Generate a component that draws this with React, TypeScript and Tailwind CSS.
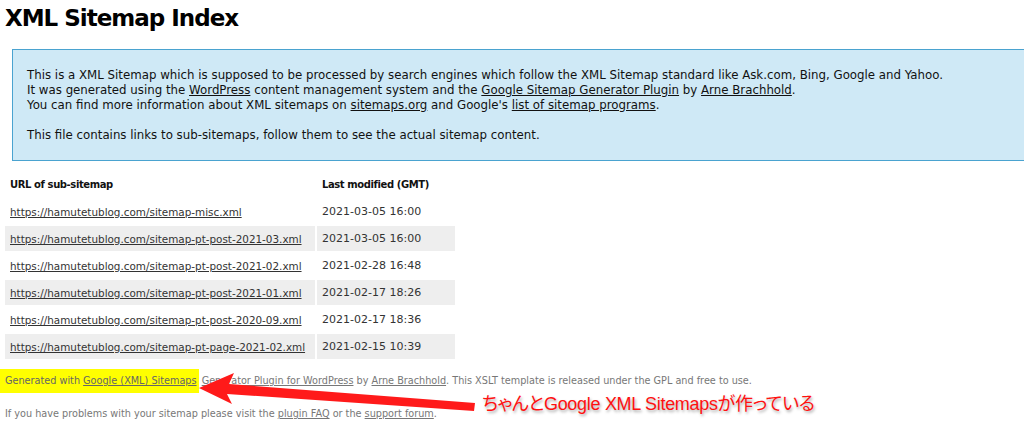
import React from "react";

const rows = [
  ["https://hamutetublog.com/sitemap-misc.xml", "2021-03-05 16:00"],
  ["https://hamutetublog.com/sitemap-pt-post-2021-03.xml", "2021-03-05 16:00"],
  ["https://hamutetublog.com/sitemap-pt-post-2021-02.xml", "2021-02-28 16:48"],
  ["https://hamutetublog.com/sitemap-pt-post-2021-01.xml", "2021-02-17 18:26"],
  ["https://hamutetublog.com/sitemap-pt-post-2020-09.xml", "2021-02-17 18:36"],
  ["https://hamutetublog.com/sitemap-pt-page-2021-02.xml", "2021-02-15 10:39"],
];

export default function App() {
  return (
    <div className="relative w-[1024px] h-[437px] overflow-hidden bg-white text-[#222] font-['DejaVu_Sans',sans-serif]">
      <h1 className="pl-[5px] pt-[3px] text-[23px] leading-[30px] font-bold tracking-[-1px] text-black">
        XML Sitemap Index
      </h1>
      <div className="ml-[12px] mt-[16px] w-[1100px] border border-[#4aa3d0] bg-[#cfe9f6] pl-[14px] pt-[18px] pb-[17px] text-[11.8px] leading-[15px] text-[#111]">
        <p>
          This is a XML Sitemap which is supposed to be processed by search engines which follow the XML Sitemap standard like Ask.com, Bing, Google and Yahoo.
          <br />
          It was generated using the <span className="underline">WordPress</span> content management system and the{" "}
          <span className="underline">Google Sitemap Generator Plugin</span> by <span className="underline">Arne Brachhold</span>.
          <br />
          You can find more information about XML sitemaps on <span className="underline">sitemaps.org</span> and Google's{" "}
          <span className="underline">list of sitemap programs</span>.
        </p>
        <p className="mt-[15px]">
          This file contains links to sub-sitemaps, follow them to see the actual sitemap content.
        </p>
      </div>
      <table className="mt-[9px] ml-[3px] border-separate border-spacing-[2px] leading-[14px]">
        <thead>
          <tr>
            <th className="h-[25px] w-[310px] pl-[5px] text-left font-bold text-[10px] tracking-[-0.4px] text-[#111]">URL of sub-sitemap</th>
            <th className="h-[25px] w-[138px] pl-[5px] text-left font-bold text-[10px] tracking-[-0.4px] text-[#111]">Last modified (GMT)</th>
          </tr>
        </thead>
        <tbody>
          {rows.map(([u, d], i) => (
            <tr key={u} className={i % 2 === 1 ? "bg-[#eeeeee]" : ""}>
              <td className="h-[25px] pl-[5px] pr-[5px] whitespace-nowrap text-[10.4px]">
                <span className="underline text-[#333]">{u}</span>
              </td>
              <td className="h-[25px] pl-[5px] whitespace-nowrap text-[11px] text-[#333]">{d}</td>
            </tr>
          ))}
        </tbody>
      </table>
      <div className="mt-[8px] text-[9.7px] leading-[14px] text-[#777]">
        <p className="whitespace-nowrap">
          <span className="inline-block bg-[#ffff00] pl-[5px] pr-[2px] py-[5px] text-[#666]">
            Generated with <span className="underline">Google (XML) Sitemaps</span>
          </span>{" "}
          <span className="underline">Generator Plugin for WordPress</span> by <span className="underline">Arne Brachhold</span>. This XSLT template is released under the GPL and free to use.
        </p>
        <p className="mt-[14px] pl-[5px] whitespace-nowrap">
          If you have problems with your sitemap please visit the <span className="underline">plugin FAQ</span> or the{" "}
          <span className="underline">support forum</span>.
        </p>
      </div>
      <svg className="absolute left-0 top-0 pointer-events-none" width="1024" height="437">
        <polygon points="199,388 234,373 229,384 475,403 474,411 227,394 232,404" fill="#ff1a1a" />
      </svg>
      <div className="absolute left-[482px] top-[391px] whitespace-nowrap text-[18px] leading-[26px] tracking-[-0.3px] text-[#ff1111] font-['Liberation_Sans','Noto_Sans_CJK_JP',sans-serif] [font-feature-settings:'palt'] [text-shadow:1px_2px_3px_rgba(0,0,0,0.35)]">
        ちゃんとGoogle XML Sitemapsが作っている
      </div>
    </div>
  );
}
